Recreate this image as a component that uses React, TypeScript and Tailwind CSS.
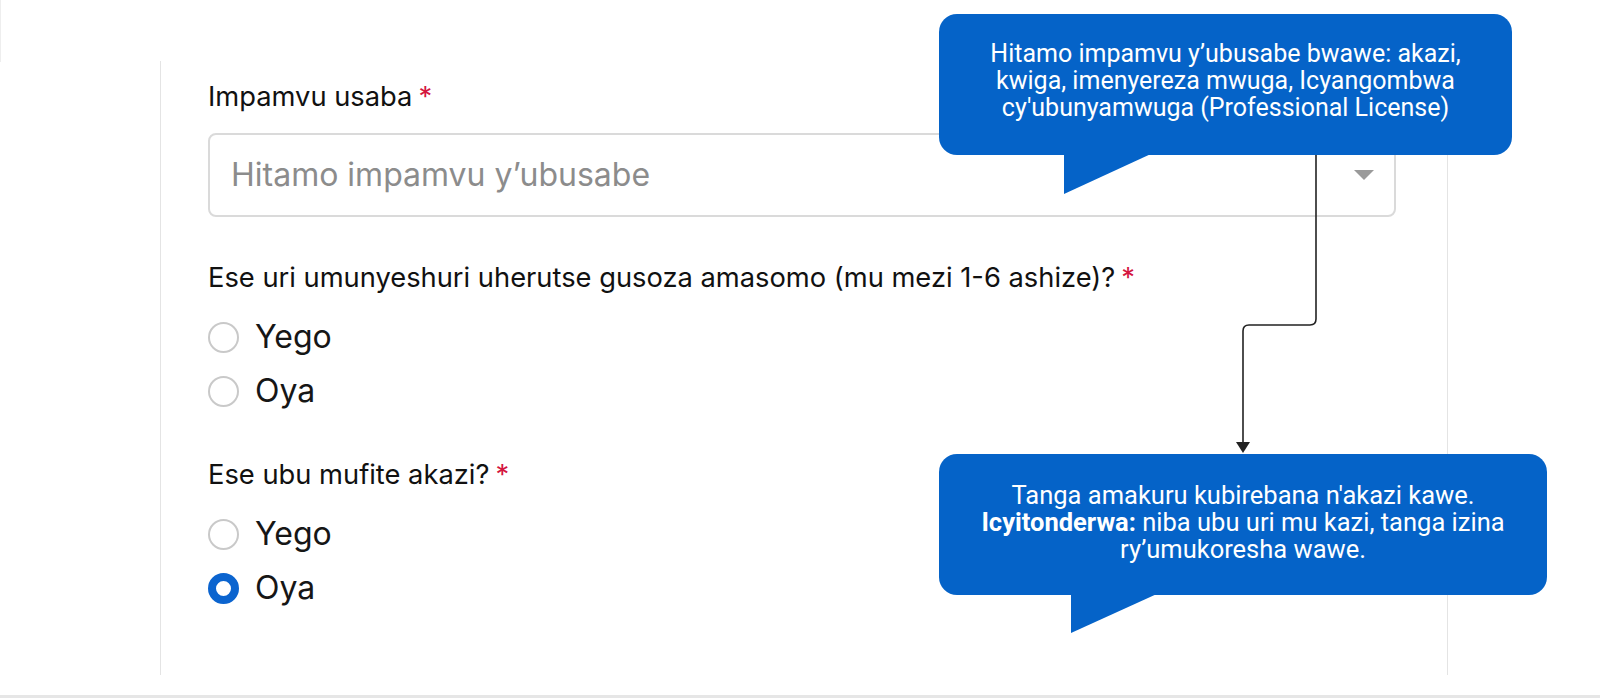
import React from "react";

const formFont = { fontFamily: "Inter, 'Noto Sans', sans-serif" } as React.CSSProperties;

function Req() {
  return <span className="text-[#d4163f] ml-[6px]">*</span>;
}

function Radio({ label, checked }: { label: string; checked?: boolean }) {
  return (
    <div className="flex items-center h-[54px]">
      {checked ? (
        <span className="w-[31px] h-[31px] rounded-full border-[8px] border-[#0b64cf] bg-white shrink-0" />
      ) : (
        <span className="w-[31px] h-[31px] rounded-full border-2 border-[#c9c9c9] bg-white shrink-0" />
      )}
      <span className="ml-[16px] text-[32px] leading-[40px] text-[#161616]">{label}</span>
    </div>
  );
}

export default function App() {
  return (
    <div className="relative w-full h-[698px] bg-white overflow-hidden" style={formFont}>
      <div className="absolute left-0 top-0 w-px h-[62px] bg-[#eeeeee]" />
      <div className="ml-[160px] mt-[61px] w-[1288px] h-[614px] border-l border-r border-[#e4e4e4] pl-[47px] pr-[51px] pt-[18px]">
        <div className="text-[27.3px] leading-[36px] text-[#111]">
          Impamvu usaba<Req />
        </div>
        <div className="mt-[18px] h-[84px] rounded-[8px] border-2 border-[#dadada] flex items-center justify-between pl-[21px] pr-[20px]">
          <span className="text-[32px] text-[#8c8c8c]">Hitamo impamvu y’ubusabe</span>
          <svg width="20" height="10" viewBox="0 0 20 10">
            <polygon points="0,0 20,0 10,10" fill="#9a9a9a" />
          </svg>
        </div>
        <div className="mt-[43px] text-[27.3px] leading-[36px] text-[#111]">
          Ese uri umunyeshuri uherutse gusoza amasomo (mu mezi 1-6 ashize)?<Req />
        </div>
        <div className="mt-[14px] flex flex-col">
          <Radio label="Yego" />
          <Radio label="Oya" />
        </div>
        <div className="mt-[39px] text-[27.3px] leading-[36px] text-[#111]">
          Ese ubu mufite akazi?<Req />
        </div>
        <div className="mt-[14px] flex flex-col">
          <Radio label="Yego" />
          <Radio label="Oya" checked />
        </div>
      </div>
      <div className="absolute left-0 bottom-0 w-full h-[3px] bg-[#e6e6e6]" />

      <svg className="absolute left-0 top-0 pointer-events-none" width="1600" height="698">
        <path d="M1316 155 V319 Q1316 325 1310 325 H1249 Q1243 325 1243 331 V443" fill="none" stroke="#222" strokeWidth="1.6" />
        <polygon points="1236,442 1250,442 1243,453" fill="#222" />
      </svg>

      <div
        className="absolute left-[939px] top-[14px] w-[573px] h-[141px] rounded-[18px] bg-[#0563c8] flex items-center justify-center text-center text-white pb-[9px]"
        style={{ fontFamily: "Roboto, 'Noto Sans', sans-serif" }}
      >
        <div className="text-[25px] leading-[27px]">
          Hitamo impamvu y’ubusabe bwawe: akazi,
          <br />
          kwiga, imenyereza mwuga, Icyangombwa
          <br />
          cy'ubunyamwuga (Professional License)
        </div>
        <svg className="absolute left-[125px] top-[139px]" width="90" height="42" viewBox="0 0 90 42">
          <polygon points="0,0 0,41 89,0" fill="#0563c8" />
        </svg>
      </div>

      <div
        className="absolute left-[939px] top-[454px] w-[608px] h-[141px] rounded-[18px] bg-[#0563c8] flex items-center justify-center text-center text-white pb-[5px]"
        style={{ fontFamily: "Roboto, 'Noto Sans', sans-serif" }}
      >
        <div className="text-[25.5px] leading-[27px]">
          Tanga amakuru kubirebana n'akazi kawe.
          <br />
          <b className="font-bold">Icyitonderwa:</b> niba ubu uri mu kazi, tanga izina
          <br />
          ry’umukoresha wawe.
        </div>
        <svg className="absolute left-[132px] top-[139px]" width="90" height="42" viewBox="0 0 90 42">
          <polygon points="0,0 0,40 88,0" fill="#0563c8" />
        </svg>
      </div>
    </div>
  );
}
